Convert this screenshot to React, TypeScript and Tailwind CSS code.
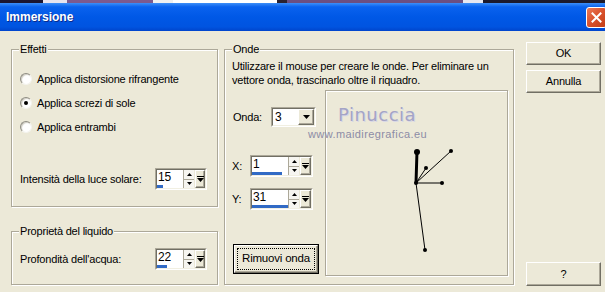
import React from "react";

const raised =
  "bg-[#ece9d8] border border-t-white border-l-white border-r-[#716f64] border-b-[#716f64] shadow-[inset_-1px_-1px_0_#aca899]";

function Group({
  label,
  className,
  children,
}: {
  label: string;
  className: string;
  children?: React.ReactNode;
}) {
  return (
    <div
      className={`relative border border-[#aca899] shadow-[inset_1px_1px_0_#fff,1px_1px_0_#fff] ${className}`}
    >
      <span className="absolute left-[7px] top-[-8px] px-[1px] bg-[#ece9d8] leading-[14px]">
        {label}
      </span>
      {children}
    </div>
  );
}

function Radio({ checked }: { checked?: boolean }) {
  return (
    <div className="w-[12px] h-[12px] rounded-full bg-white border border-t-[#8e8c82] border-l-[#8e8c82] border-r-[#f4f3ee] border-b-[#f4f3ee] shadow-[inset_1px_1px_1px_#cfcdc2] flex items-center justify-center shrink-0">
      {checked && <div className="w-[4px] h-[4px] rounded-full bg-black" />}
    </div>
  );
}

function EndGlyph() {
  return (
    <svg width="7" height="7" viewBox="0 0 7 7">
      <rect x="0" y="0" width="7" height="1" fill="#000" />
      <polygon points="0,2 7,2 3.5,6" fill="#000" />
    </svg>
  );
}

function Spin({
  wClass,
  fieldClass,
  barClass,
  value,
}: {
  wClass: string;
  fieldClass: string;
  barClass: string;
  value: string;
}) {
  return (
    <div
      className={`h-[22px] shrink-0 border border-t-[#aca899] border-l-[#aca899] border-r-white border-b-white ${wClass}`}
    >
      <div className="flex h-full border border-t-[#716f64] border-l-[#716f64] border-r-[#f1efe2] border-b-[#f1efe2]">
        <div className={`flex flex-col bg-white ${fieldClass}`}>
          <div className="h-[15px] leading-[15px] pl-[1px] text-[12px]">{value}</div>
          <div className={`h-[3px] bg-[#316ac5] ${barClass}`} />
        </div>
        <div className="w-[11px] flex flex-col bg-[#f6f5f0] border-l border-[#aca899]">
          <div className="flex-1 flex items-center justify-center border-b border-[#aca899]">
            <svg width="5" height="3" viewBox="0 0 5 3">
              <polygon points="2.5,0 5,3 0,3" fill="#000" />
            </svg>
          </div>
          <div className="flex-1 flex items-center justify-center">
            <svg width="5" height="3" viewBox="0 0 5 3">
              <polygon points="0,0 5,0 2.5,3" fill="#000" />
            </svg>
          </div>
        </div>
        <div className={`flex-1 ml-[1px] flex items-center justify-center ${raised}`}>
          <EndGlyph />
        </div>
      </div>
    </div>
  );
}

function Button({ label, className }: { label: string; className: string }) {
  return (
    <div className={`flex items-center justify-center ${raised} ${className}`}>
      {label}
    </div>
  );
}

export default function App() {
  return (
    <div className="relative w-[605px] h-[292px] overflow-hidden bg-[#ece9d8] font-['Liberation_Sans',Arial,sans-serif] text-[11px] tracking-[-0.2px] text-black">
      {/* background strip above the window */}
      <div className="flex h-[3px]">
        <div className="w-[43px] bg-[#1b1530]" />
        <div className="w-[24px] bg-[#e8e4ee]" />
        <div className="w-[86px] bg-[#7d5a8e]" />
        <div className="w-[20px] bg-[#f0f0f0]" />
        <div className="w-[104px] bg-[#ffffff]" />
        <div className="w-[10px] bg-[#2a2230]" />
        <div className="w-[176px] bg-[#6c4f80]" />
        <div className="w-[20px] bg-[#e8e8f0]" />
        <div className="w-[122px] bg-[#1c1a2c]" />
      </div>

      {/* title bar */}
      <div className="flex items-center h-[28px] bg-[linear-gradient(to_bottom,#3d8ff8_0%,#0a62ee_14%,#0058e6_50%,#0054e0_85%,#0045cc_100%)]">
        <span className="pl-[6px] text-white font-bold text-[12px] tracking-[0px] [text-shadow:1px_1px_0_#0a2a8c]">
          Immersione
        </span>
        <div className="ml-auto mr-[-2px] w-[21px] h-[21px] rounded-[3px] border border-white bg-[linear-gradient(135deg,#ec7a58_0%,#d9512c_50%,#c23d14_100%)] flex items-center justify-center">
          <svg width="11" height="11" viewBox="0 0 11 11">
            <path d="M1.5 1.5 L9.5 9.5 M9.5 1.5 L1.5 9.5" stroke="#fff" strokeWidth="2" strokeLinecap="square" />
          </svg>
        </div>
      </div>

      {/* body */}
      <div className="flex items-start">
        {/* left column */}
        <div className="ml-[11px] mt-[18px] w-[207px] flex flex-col">
          <Group label="Effetti" className="h-[158px]">
            <div className="pt-[17px] pl-[8px] flex flex-col">
              <div className="h-[24px] flex items-center gap-[5px]">
                <Radio />
                <span>Applica distorsione rifrangente</span>
              </div>
              <div className="h-[24px] flex items-center gap-[5px]">
                <Radio checked />
                <span>Applica screzi di sole</span>
              </div>
              <div className="h-[24px] flex items-center gap-[5px]">
                <Radio />
                <span>Applica entrambi</span>
              </div>
            </div>
            <div className="mt-[29px] h-[22px] flex items-center">
              <span className="w-[143px] pl-[8px] shrink-0">Intensità della luce solare:</span>
              <Spin wClass="w-[52px]" fieldClass="w-[26px]" barClass="w-[6px]" value="15" />
            </div>
          </Group>
          <Group label="Proprietà del liquido" className="h-[54px] mt-[24px]">
            <div className="pt-[16px] h-[38px] flex items-center">
              <span className="w-[143px] pl-[8px] shrink-0">Profondità dell'acqua:</span>
              <Spin wClass="w-[52px]" fieldClass="w-[26px]" barClass="w-[10px]" value="22" />
            </div>
          </Group>
        </div>

        {/* Onde */}
        <Group label="Onde" className="ml-[6px] mt-[18px] w-[290px] h-[236px]">
          <p className="pl-[7px] pt-[9px] leading-[14px] whitespace-nowrap">
            Utilizzare il mouse per creare le onde. Per eliminare un
            <br />
            vettore onda, trascinarlo oltre il riquadro.
          </p>
          <div className="pl-[7px] mt-[3px] flex">
            <div className="w-[93px] flex flex-col shrink-0">
              <div className="mt-[17px] h-[20px] flex items-center">
                <span className="w-[39px] pl-[1px]">Onda:</span>
                <div className="w-[45px] h-[20px] border border-t-[#aca899] border-l-[#aca899] border-r-white border-b-white">
                  <div className="flex h-full border border-t-[#716f64] border-l-[#716f64] border-r-[#f1efe2] border-b-[#f1efe2]">
                    <div className="flex-1 bg-white pl-[2px] leading-[16px] text-[12px]">3</div>
                    <div className={`w-[16px] flex items-center justify-center ${raised}`}>
                      <svg width="7" height="4" viewBox="0 0 7 4">
                        <polygon points="0,0 7,0 3.5,4" fill="#000" />
                      </svg>
                    </div>
                  </div>
                </div>
              </div>
              <div className="mt-[28px] h-[22px] flex items-center">
                <span className="w-[18px]">X:</span>
                <Spin wClass="w-[63px]" fieldClass="w-[36px]" barClass="w-[30px]" value="1" />
              </div>
              <div className="mt-[11px] h-[22px] flex items-center">
                <span className="w-[18px]">Y:</span>
                <Spin wClass="w-[63px]" fieldClass="w-[36px]" barClass="w-[40px]" value="31" />
              </div>
              <div className="mt-[34px] ml-[1px] w-[86px] h-[30px] border border-black">
                <div className={`h-full p-[2px] ${raised}`}>
                  <div className="h-full border border-dotted border-black flex items-center justify-center text-[11.5px]">
                    Rimuovi onda
                  </div>
                </div>
              </div>
            </div>
            <div className="w-[183px] h-[186px] border border-[#aca899] shadow-[1px_1px_0_#fff,inset_1px_1px_0_#fff] shrink-0">
              <svg width="181" height="184" viewBox="0 0 181 184">
                <line x1="90" y1="92" x2="91" y2="60" stroke="#000" strokeWidth="3" />
                <line x1="90" y1="92" x2="100" y2="77" stroke="#000" strokeWidth="1" />
                <line x1="90" y1="92" x2="125" y2="60" stroke="#000" strokeWidth="1" />
                <line x1="90" y1="92" x2="116" y2="92" stroke="#000" strokeWidth="1" />
                <line x1="90" y1="92" x2="99" y2="159" stroke="#000" strokeWidth="1" />
                <circle cx="91" cy="61" r="3" fill="#000" />
                <circle cx="90" cy="92" r="2" fill="#000" />
                <circle cx="100" cy="77" r="2" fill="#000" />
                <circle cx="125" cy="60" r="2" fill="#000" />
                <circle cx="116" cy="92" r="2" fill="#000" />
                <circle cx="99" cy="159" r="2" fill="#000" />
              </svg>
            </div>
          </div>
        </Group>

        {/* right buttons */}
        <div className="ml-[12px] mt-[11px] w-[75px] flex flex-col">
          <Button label="OK" className="h-[23px]" />
          <Button label="Annulla" className="h-[23px] mt-[5px]" />
          <Button label="?" className="h-[24px] mt-[169px]" />
        </div>
      </div>

      {/* watermark */}
      <div className="absolute left-[338px] top-[105px] font-['DejaVu_Sans',sans-serif] text-[18px] leading-[20px] tracking-[0.5px] text-[#a4a4c6] [text-shadow:1px_1px_0_#d8d8e6]">
        Pinuccia
      </div>
      <div className="absolute left-[308px] top-[128px] text-[11px] leading-[12px] tracking-[0.4px] text-[#8c8ca6]">
        www.maidiregrafica.eu
      </div>
    </div>
  );
}
